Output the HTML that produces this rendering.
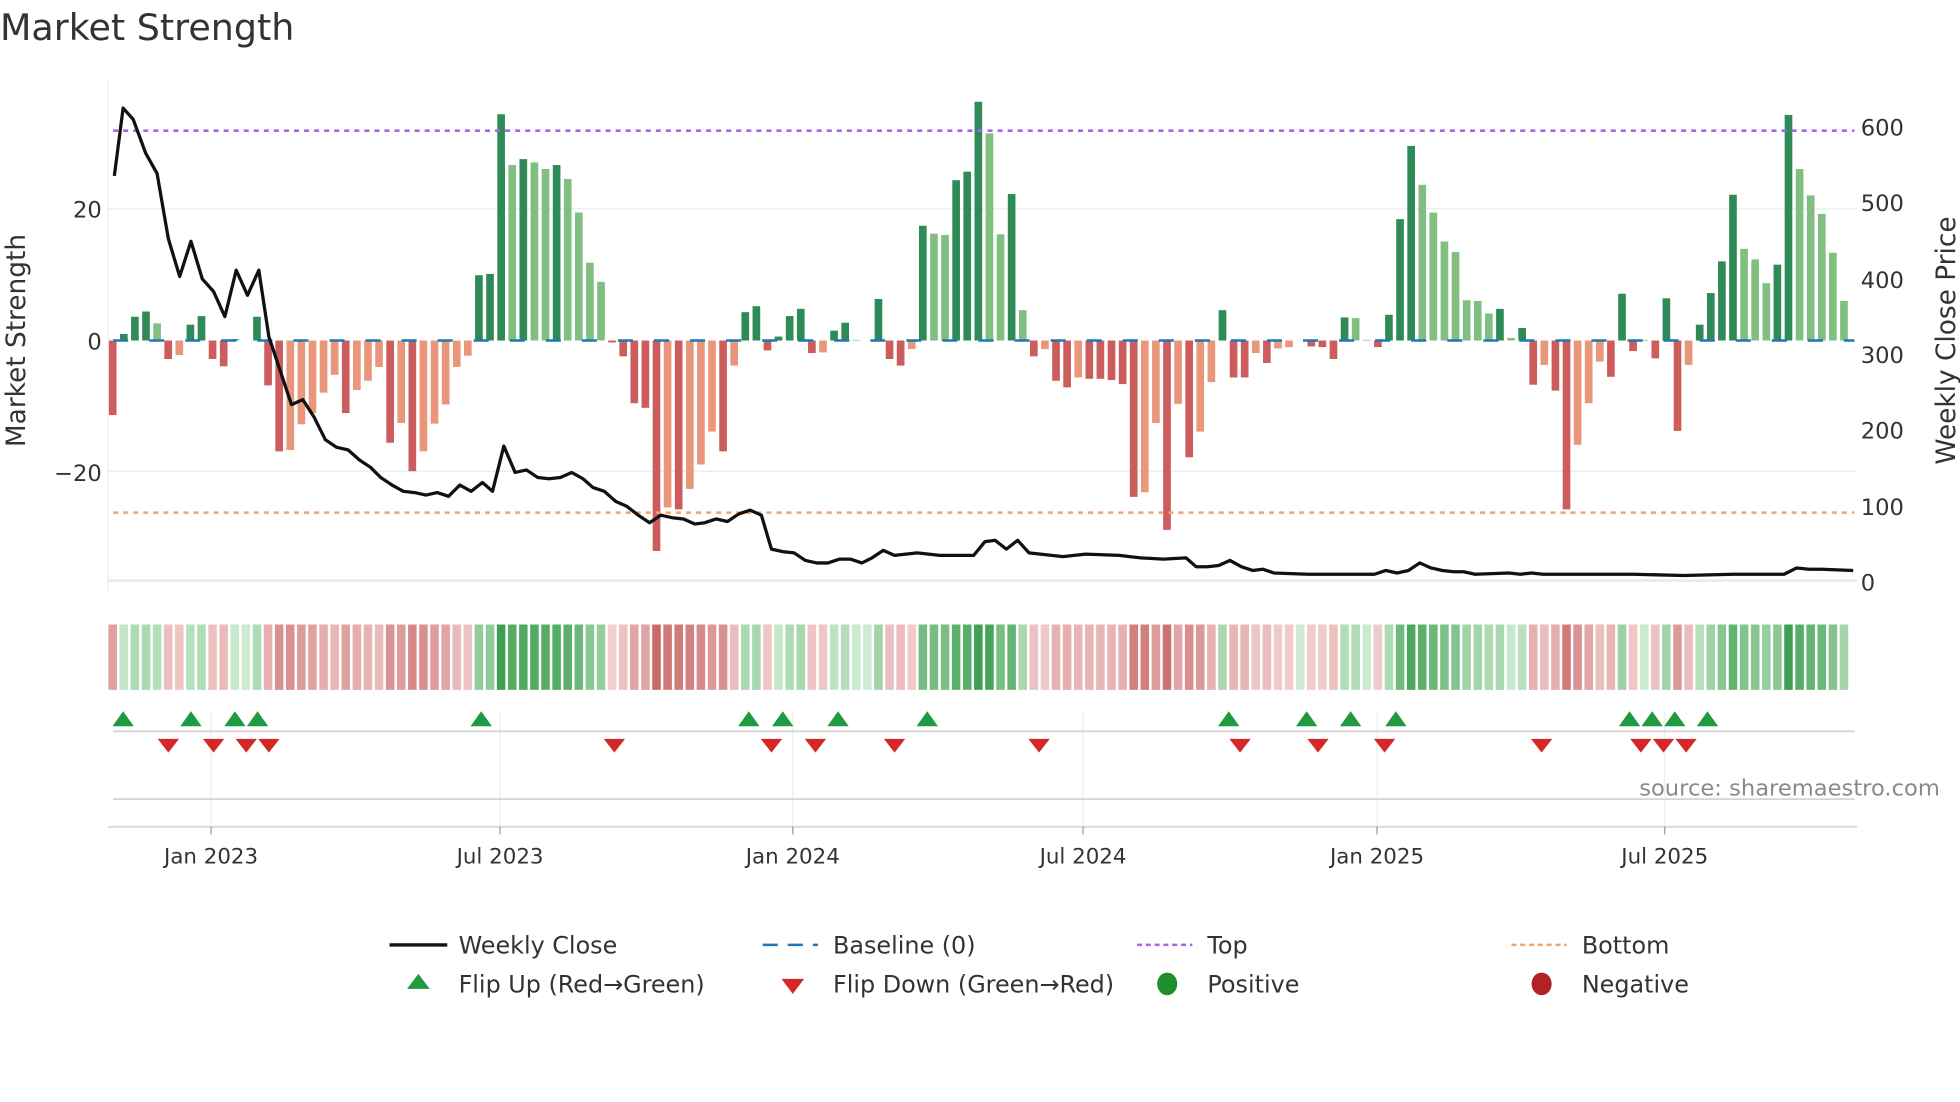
<!DOCTYPE html>
<html><head><meta charset="utf-8">
<style>
html,body{margin:0;padding:0;background:#fff;}
svg{display:block;}
text{font-family:"DejaVu Sans","Liberation Sans",sans-serif;fill:#333;}
</style></head>
<body>
<svg id="s" width="1960" height="1102" viewBox="0 0 1560 877" preserveAspectRatio="none" xmlns="http://www.w3.org/2000/svg">
<rect width="1560" height="877" fill="#fff"/>
<text x="0" y="32" font-size="29" fill="#333">Market Strength</text>
<!-- grid -->
<line x1="86" y1="65" x2="86" y2="470" stroke="#eef0f4" stroke-width="1.2"/>
<line x1="86" y1="166" x2="1478" y2="166" stroke="#eceef3" stroke-width="1.2"/>
<line x1="86" y1="375" x2="1478" y2="375" stroke="#eceef3" stroke-width="1.2"/>
<line x1="86" y1="462" x2="1478" y2="462" stroke="#e6e9f0" stroke-width="2"/>
<g id="bars"></g>
<g id="heat"></g>
<line x1="90" y1="104" x2="1476" y2="104" stroke="#a368e6" stroke-width="2" stroke-dasharray="4,4"/>
<line x1="90" y1="408" x2="1476" y2="408" stroke="#efa56c" stroke-width="2" stroke-dasharray="4,4"/>
<line x1="90" y1="271" x2="1476" y2="271" stroke="#1f77b4" stroke-width="2" stroke-dasharray="12,16.7"/>
<polyline id="price" fill="none" stroke="#111" stroke-width="2.6" stroke-linejoin="round"/>
<!-- axis labels -->
<text x="81" y="173" font-size="18" text-anchor="end">20</text>
<text x="81" y="278" font-size="18" text-anchor="end">0</text>
<text x="81" y="383" font-size="18" text-anchor="end">−20</text>
<text x="1481" y="108" font-size="18">600</text>
<text x="1481" y="168" font-size="18">500</text>
<text x="1481" y="229" font-size="18">400</text>
<text x="1481" y="289" font-size="18">300</text>
<text x="1481" y="349" font-size="18">200</text>
<text x="1481" y="410" font-size="18">100</text>
<text x="1481" y="470" font-size="18">0</text>
<text transform="translate(20,271) rotate(-90)" font-size="21" text-anchor="middle">Market Strength</text>
<text transform="translate(1556,271) rotate(-90)" font-size="21" text-anchor="middle">Weekly Close Price</text>
<!-- flip panel -->
<g stroke="#eceef2" stroke-width="1">
<line x1="168" y1="566" x2="168" y2="660"/><line x1="398" y1="566" x2="398" y2="660"/>
<line x1="631" y1="566" x2="631" y2="660"/><line x1="862" y1="566" x2="862" y2="660"/>
<line x1="1096" y1="566" x2="1096" y2="660"/><line x1="1325" y1="566" x2="1325" y2="660"/>
</g>
<line x1="90" y1="582" x2="1476" y2="582" stroke="#d4d4d4" stroke-width="1.5"/>
<line x1="90" y1="636" x2="1476" y2="636" stroke="#d4d4d4" stroke-width="1.5"/>
<line x1="86" y1="658" x2="1478" y2="658" stroke="#d8d8d8" stroke-width="1.5"/>
<g stroke="#999" stroke-width="1">
<line x1="168" y1="658" x2="168" y2="664"/><line x1="398" y1="658" x2="398" y2="664"/>
<line x1="631" y1="658" x2="631" y2="664"/><line x1="862" y1="658" x2="862" y2="664"/>
<line x1="1096" y1="658" x2="1096" y2="664"/><line x1="1325" y1="658" x2="1325" y2="664"/>
</g>
<g id="flips"></g>
<text x="1544" y="633" font-size="18" fill="#8a8a8a" text-anchor="end" style="fill:#8a8a8a">source: sharemaestro.com</text>
<g font-size="17" text-anchor="middle">
<text x="168" y="687">Jan 2023</text><text x="398" y="687">Jul 2023</text>
<text x="631" y="687">Jan 2024</text><text x="862" y="687">Jul 2024</text>
<text x="1096" y="687">Jan 2025</text><text x="1325" y="687">Jul 2025</text>
</g>
<!-- legend -->
<line x1="310" y1="752" x2="356" y2="752" stroke="#111" stroke-width="2.6"/>
<text x="365" y="759" font-size="19">Weekly Close</text>
<line x1="607" y1="752" x2="651" y2="752" stroke="#1f77b4" stroke-width="2" stroke-dasharray="12,8"/>
<text x="663" y="759" font-size="19">Baseline (0)</text>
<line x1="905" y1="752" x2="949" y2="752" stroke="#a368e6" stroke-width="2" stroke-dasharray="4,3"/>
<text x="961" y="759" font-size="19">Top</text>
<line x1="1203" y1="752" x2="1247" y2="752" stroke="#efa56c" stroke-width="2" stroke-dasharray="4,3"/>
<text x="1259" y="759" font-size="19">Bottom</text>
<polygon points="333,775 342,787 324,787" fill="#1f9a3e"/>
<text x="365" y="790" font-size="19">Flip Up (Red→Green)</text>
<polygon points="622,779 640,779 631,791" fill="#d62728"/>
<text x="663" y="790" font-size="19">Flip Down (Green→Red)</text>
<ellipse cx="929" cy="783" rx="8" ry="9" fill="#1f8f2e"/>
<text x="961" y="790" font-size="19">Positive</text>
<ellipse cx="1227" cy="783" rx="8" ry="9" fill="#b22222"/>
<text x="1259" y="790" font-size="19">Negative</text>
</svg>
<script>
var D="-11.3R 1G 3.6G 4.4G 2.6g -2.8R -2.2r 2.4G 3.7G -2.8R -3.9R 0.2G 0G 3.6G -6.8R -16.8R -16.6r -12.7r -11r -7.9r -5.2r -11R -7.5r -6.1r -4r -15.5R -12.5r -19.8R -16.8r -12.6r -9.7r -4r -2.3r 9.9G 10.1G 34.3G 26.6g 27.5G 27g 26g 26.6G 24.5g 19.4g 11.8g 8.9g -0.3R -2.4R -9.5R -10.2R -31.9R -25.3r -25.6R -22.5r -18.8r -13.8r -16.8R -3.8r 4.3G 5.2G -1.5R 0.6G 3.7G 4.8G -1.9R -1.8r 1.5G 2.7G 0.1g 0G 6.3G -2.8R -3.8R -1.3r 17.4G 16.2g 16g 24.3G 25.6G 36.2G 31.4g 16.1g 22.2G 4.6g -2.4R -1.3r -6.1R -7.1R -5.6r -5.8R -5.8R -6R -6.6R -23.7R -23r -12.5r -28.7R -9.6r -17.7R -13.8r -6.3r 4.6G -5.6R -5.6R -1.9r -3.4R -1.2r -1r 0G -0.9R -1R -2.8R 3.5G 3.4g 0.1g -1R 3.9G 18.4G 29.5G 23.6g 19.4g 15g 13.4g 6.1g 6g 4.1g 4.8G 0.4g 1.9G -6.7R -3.7r -7.6R -25.6R -15.8r -9.5r -3.2r -5.5R 7.1G -1.6R 0.1g -2.7R 6.4G -13.7R -3.7r 2.4G 7.2G 12G 22.1G 13.9g 12.3g 8.7g 11.5G 34.2G 26g 22g 19.2g 13.3g 6g".split(" ");
var C={G:"#2e8b57",g:"#80bf80",R:"#cd5c5c",r:"#e9967a"};
var NS="http://www.w3.org/2000/svg",b=document.getElementById("bars"),h=document.getElementById("heat");
function mix(a,c,t){var r=[];for(var i=0;i<3;i++)r.push(Math.round(a[i]+(c[i]-a[i])*t));return "rgb("+r.join(",")+")";}
D.forEach(function(s,i){
 var v=parseFloat(s),t=s.slice(-1),x=89.7+8.833*i;
 var y0=271,y1=271-v*5.25;
 if(Math.abs(v)>0.05){var r=document.createElementNS(NS,"rect");r.setAttribute("x",x-3.05);r.setAttribute("width",6.1);
 r.setAttribute("y",Math.min(y0,y1));r.setAttribute("height",Math.abs(y1-y0));r.setAttribute("fill",C[t]);b.appendChild(r);}
 var k=Math.pow(Math.min(Math.abs(v)/34,1),0.7),col;
 if(v>=0)col=mix([205,235,208],[62,160,80],k);else col=mix([244,212,212],[201,100,100],k);
 var q=document.createElementNS(NS,"rect");q.setAttribute("x",x-3.4);q.setAttribute("width",6.8);q.setAttribute("y",497);q.setAttribute("height",52);q.setAttribute("fill",col);h.appendChild(q);
});
var P="91,140 98,86 106,95 116,122 125,138 134,190 143,220 152,192 161,222 170,232 179,252 188,215 197,235 206,215 214,268 223,295 232,322 241,318 250,332 259,350 268,356 277,358 286,366 295,372 303,380 312,386 321,391 330,392 339,394 348,392 357,395 366,386 375,391 384,384 392,391 401,355 410,376 419,374 428,380 437,381 446,380 455,376 464,381 472,388 481,391 490,399 499,403 508,410 517,416 526,410 535,412 544,413 553,417 561,416 570,413 579,415 588,409 597,406 606,410 614,437 623,439 632,440 641,446 650,448 659,448 668,445 677,445 686,448 694,444 703,438 712,442 721,441 730,440 739,441 748,442 766,442 775,442 784,431 792,430 801,437 810,430 819,440 828,441 837,442 846,443 855,442 864,441 891,442 899,443 908,444 926,445 944,444 952,451 961,451 970,450 979,446 988,451 997,454 1005,453 1014,456 1041,457 1094,457 1103,454 1112,456 1121,454 1130,448 1139,452 1148,454 1157,455 1165,455 1174,457 1201,456 1210,457 1219,456 1228,457 1300,457 1340,458 1380,457 1420,457 1430,452 1440,453 1450,453 1475,454";
document.getElementById("price").setAttribute("points",P);
var f=document.getElementById("flips");
[98,152,187,205,383,596,623,667,738,978,1040,1075,1111,1297,1315,1333,1359].forEach(function(x){
 var p=document.createElementNS(NS,"polygon");p.setAttribute("points",x+",566 "+(x+8.5)+",578 "+(x-8.5)+",578");p.setAttribute("fill","#1f9a3e");f.appendChild(p);});
[134,170,196,214,489,614,649,712,827,987,1049,1102,1227,1306,1324,1342].forEach(function(x){
 var p=document.createElementNS(NS,"polygon");p.setAttribute("points",(x-8.5)+",588 "+(x+8.5)+",588 "+x+",599");p.setAttribute("fill","#d62728");f.appendChild(p);});
</script>
</body></html>
